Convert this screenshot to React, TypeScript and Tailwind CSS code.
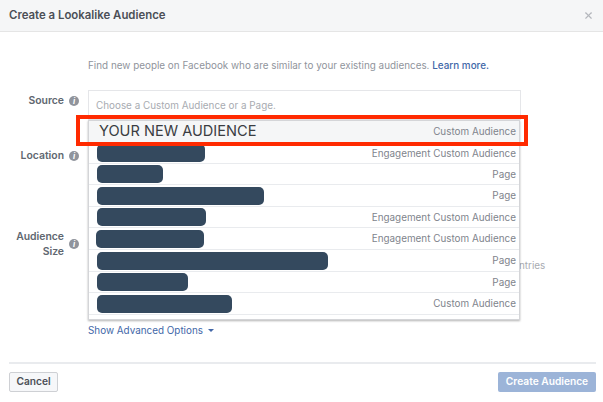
import React from 'react';
import { X } from 'lucide-react';

const rows = [
  { bar: 108, kind: 'Engagement Custom Audience', h: 21 },
  { bar: 66, kind: 'Page', h: 21 },
  { bar: 167, kind: 'Page', h: 22 },
  { bar: 109, kind: 'Engagement Custom Audience', h: 21 },
  { bar: 108, kind: 'Engagement Custom Audience', h: 22, shift: true },
  { bar: 231, kind: 'Page', h: 22 },
  { bar: 91, kind: 'Page', h: 21 },
  { bar: 135, kind: 'Custom Audience', h: 22 },
];

const Info = () => (
  <span className="flex h-[10px] w-[10px] shrink-0 items-center justify-center rounded-full bg-[#90949c] text-[8px] font-bold italic leading-none text-white">
    i
  </span>
);

const App = () => {
  return (
    <div className="relative flex h-[402px] w-[603px] flex-col overflow-hidden bg-white font-['Inter','Liberation_Sans',sans-serif]">
      {/* Header */}
      <div className="flex h-[32px] shrink-0 items-center justify-between border-b border-[#e5e5e5] bg-[#f5f6f7] pl-[9px] pr-[9px]">
        <span className="text-[11.4px] font-semibold text-[#4b4f56]">Create a Lookalike Audience</span>
        <X size={11} strokeWidth={2.5} className="text-[#b4b7bc]" />
      </div>

      {/* Form */}
      <div className="relative h-[330px] shrink-0">
        <p className="ml-[88px] mt-[26px] text-[9.9px] leading-[14px] text-[#90949c]">
          Find new people on Facebook who are similar to your existing audiences.{' '}
          <span className="font-medium text-[#4267a8]">Learn more.</span>
        </p>

        <div className="mt-[18px] flex">
          <div className="flex w-[88px] shrink-0 flex-col items-end pr-[9px] text-[10.4px] font-semibold leading-[15px] text-[#606770]">
            <div className="flex items-center gap-[5px] pt-[3px]">
              Source <Info />
            </div>
            <div className="mt-[40px] flex items-center gap-[5px]">
              Location <Info />
            </div>
            <div className="mt-[66px] flex items-center gap-[5px]">
              <span className="text-right">
                Audience
                <br />
                Size
              </span>
              <Info />
            </div>
          </div>

          <div className="relative h-[230px] flex-1">
            <div className="flex h-[30px] w-[433px] items-center border border-[#e5e6e9] bg-white pl-[7px] text-[9.9px] text-[#a8abb1]">
              Choose a Custom Audience or a Page.
            </div>
            <span className="absolute left-[431px] top-[168px] text-[9.9px] leading-[14px] text-[#a8abb1]">ntries</span>

            {/* Dropdown menu */}
            <div className="absolute left-0 top-[30px] w-[432px] border border-[#d4d5d8] bg-white pb-[4px] shadow-[0_1px_2px_rgba(0,0,0,0.3)]">
              <div className="flex h-[22px] items-center justify-between border-b border-[#e9ebee] bg-[#f5f6f7] pl-[10px] pr-[3px]">
                <span className="text-[14.6px] text-[#3a3d42]">YOUR NEW AUDIENCE</span>
                <span className="text-[9.9px] text-[#80848c]">Custom Audience</span>
              </div>
              {rows.map((row, i) => (
                <div
                  key={i}
                  style={{ height: row.h }}
                  className="flex items-center justify-between border-b border-[#e9ebee] pl-[8px] pr-[3px]"
                >
                  <span
                    style={{ width: row.bar, marginLeft: row.shift ? -1 : 0 }}
                    className="h-[18px] rounded-[5px] bg-[#34495e]"
                  />
                  <span className="text-[9.9px] text-[#80848c]">{row.kind}</span>
                </div>
              ))}
            </div>
          </div>
        </div>

        <div className="absolute left-[88px] top-[291px] flex items-center gap-[5px] text-[9.9px] leading-[14px] text-[#4267a8]">
          Show Advanced Options
          <span className="h-0 w-0 border-x-[3px] border-t-[3px] border-x-transparent border-t-[#4267a8]" />
        </div>
      </div>

      {/* Footer */}
      <div className="ml-[9px] mr-[7px] flex h-[40px] items-end justify-between border-t-2 border-[#e9ebee] pb-[10px]">
        <button className="h-[20px] w-[49px] rounded-[2px] border border-[#ced0d4] bg-[#f6f7f9] text-[10.2px] font-semibold text-[#4b4f56]">
          Cancel
        </button>
        <button className="h-[20px] w-[98px] rounded-[2px] bg-[#9cb4d8] text-[10.2px] font-semibold text-white">
          Create Audience
        </button>
      </div>

      {/* Red callout */}
      <div className="absolute left-[76px] top-[115px] h-[31px] w-[452px] border-4 border-[#ff2a00]" />
    </div>
  );
};

export default App;
